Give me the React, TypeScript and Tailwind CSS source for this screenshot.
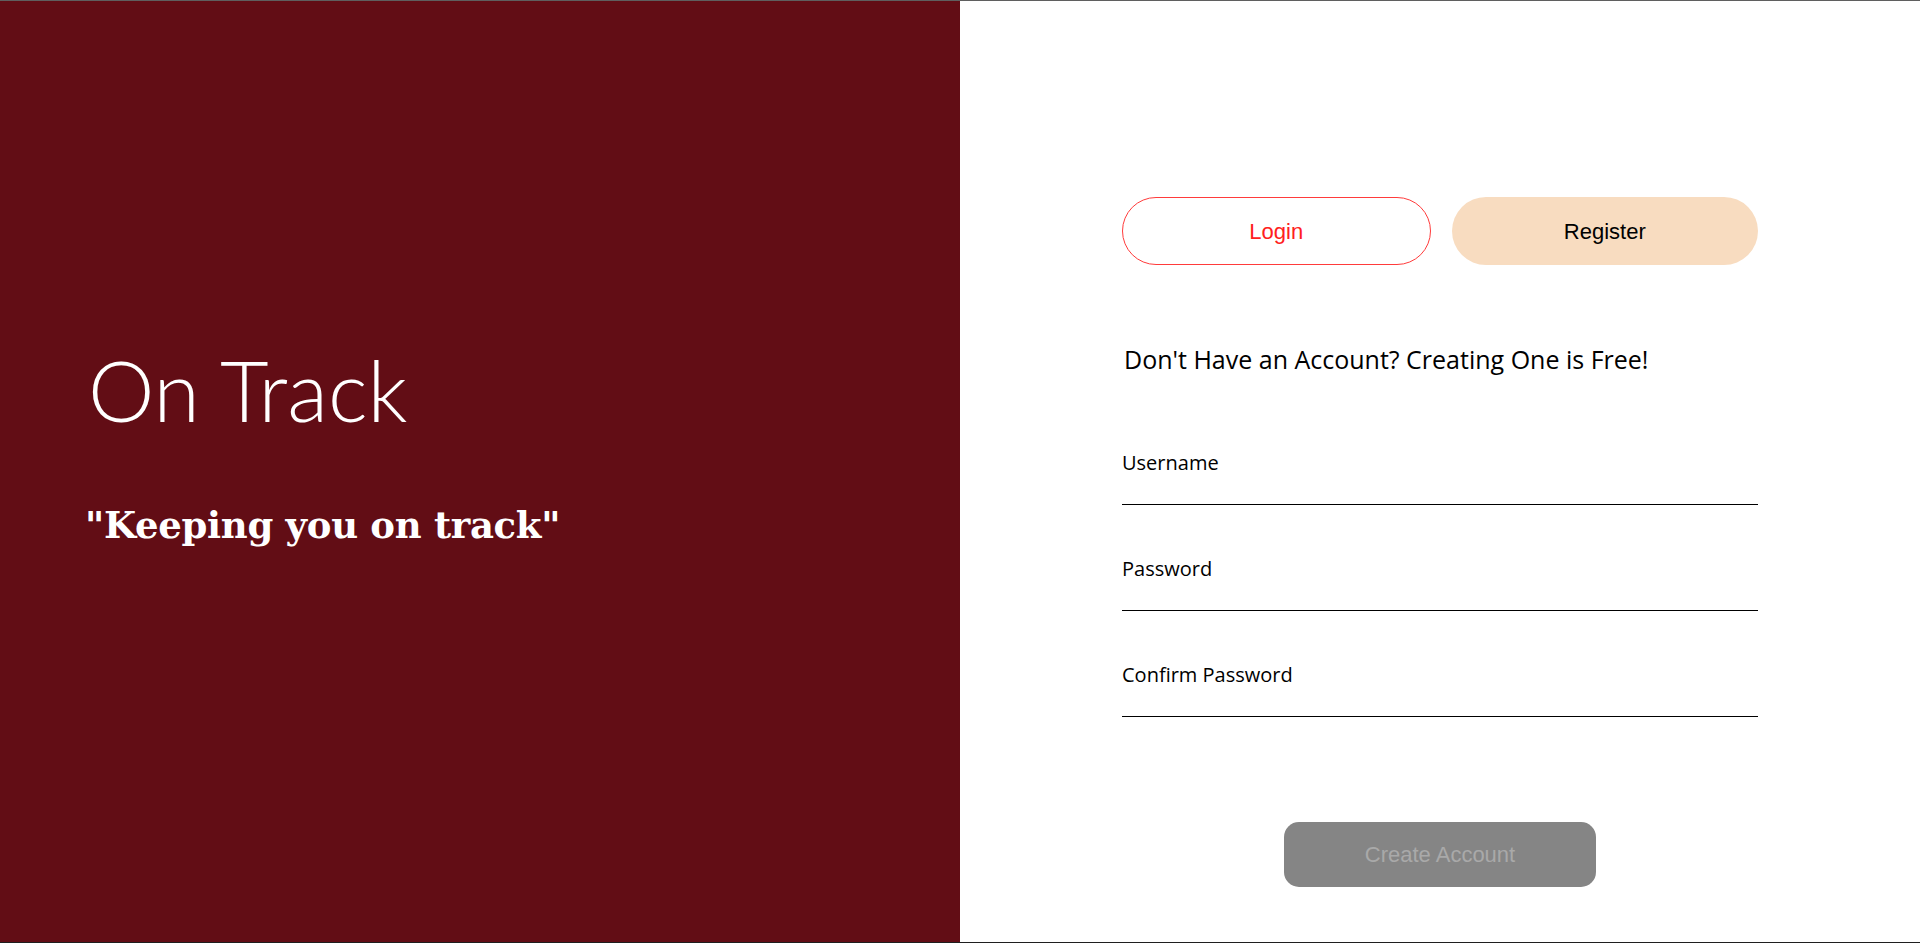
import React from 'react';

const fields = ['Username', 'Password', 'Confirm Password'];

const App: React.FC = () => {
  return (
    <div className="w-[1920px] h-[943px] flex flex-col overflow-hidden bg-white">
      <div className="h-px bg-[#5f5f5f] shrink-0"></div>
      <div className="flex flex-1 min-h-0">
        {/* Brand side */}
        <div className="w-1/2 bg-[#620d15] flex flex-col pl-[88px] pt-[339px]">
          <h1 className="text-white text-[84px] leading-[100px] font-light font-['Lato','Inter',sans-serif]">
            On Track
          </h1>
          <p className="mt-[62px] -ml-[3px] text-white text-[37px] leading-[46px] font-bold tracking-[-0.3px] font-['DejaVu_Serif','Liberation_Serif',serif]">
            "Keeping you on track"
          </p>
        </div>

        {/* Form side */}
        <div className="w-1/2 flex flex-col items-center pt-[196px]">
          <div className="w-[636px] flex gap-[21px]">
            <button className="flex-1 h-[68px] rounded-full border border-[#ff3b3b] text-[#ff2020] text-[22px] font-['Liberation_Sans',Arial,sans-serif] bg-white">
              Login
            </button>
            <button className="flex-1 h-[68px] rounded-full bg-[#f8dcc0] text-black text-[22px] font-['Liberation_Sans',Arial,sans-serif]">
              Register
            </button>
          </div>

          <div className="w-[636px] mt-[77px] font-['Open_Sans','Noto_Sans',sans-serif]">
            <h2 className="text-[25px] leading-[34px] text-black pl-[2px]">
              Don't Have an Account? Creating One is Free!
            </h2>

            <div className="mt-[74px] flex flex-col gap-[51px]">
              {fields.map((label) => (
                <label key={label} className="flex flex-col">
                  <span className="text-[20px] leading-[26px] text-black">{label}</span>
                  <input
                    type={label === 'Username' ? 'text' : 'password'}
                    className="h-[29px] border-b border-black outline-none bg-transparent text-[18px]"
                  />
                </label>
              ))}
            </div>
          </div>

          <button
            disabled
            className="mt-[105px] w-[312px] h-[65px] rounded-[15px] bg-[#858585] text-[#a9a9a9] text-[22px] font-['Liberation_Sans',Arial,sans-serif]"
          >
            Create Account
          </button>
        </div>
      </div>
      <div className="h-px bg-[#1f1f1f] shrink-0"></div>
    </div>
  );
};

export default App;
